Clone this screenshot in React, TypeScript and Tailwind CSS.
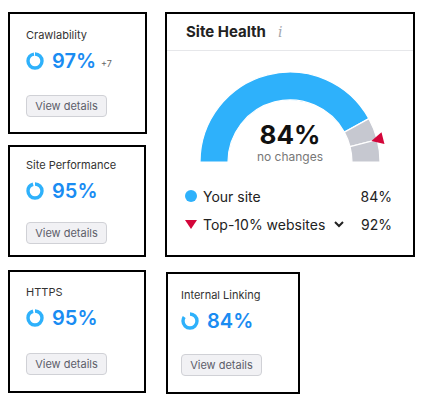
import React from "react";

type CardProps = {
  title: string;
  value: number;
  delta?: string;
  width: string;
  height: string;
  pad: string;
  btnGap: string;
};

function Ring({ pct }: { pct: number }) {
  const r = 7;
  const c = 2 * Math.PI * r;
  return (
    <svg width="18" height="18" viewBox="0 0 18 18" className="shrink-0">
      <circle
        cx="9"
        cy="9"
        r={r}
        fill="none"
        stroke="#2eb1fb"
        strokeWidth="3.4"
        strokeDasharray={`${(c * pct) / 100} ${c}`}
        transform="rotate(-90 9 9)"
      />
    </svg>
  );
}

function ScoreCard({ title, value, delta, width, height, pad, btnGap }: CardProps) {
  return (
    <div className={`border-2 border-black bg-white ${width} ${height} ${pad}`}>
      <div className="text-[11px] leading-[14px] text-[#333]">{title}</div>
      <div className="mt-[7px] flex h-[24px] items-center gap-[8px]">
        <Ring pct={value} />
        <span className="text-[20px] font-semibold leading-none text-[#1a8cf2]">{value}%</span>
        {delta && <span className="-ml-[3px] mt-[5px] text-[9px] text-[#666]">{delta}</span>}
      </div>
      <button
        className={`${btnGap} flex h-[22px] w-[81px] items-center justify-center rounded-[4px] border border-[#d0d1d6] bg-[#f1f1f4] text-[11px] text-[#5c5e6a]`}
      >
        View details
      </button>
    </div>
  );
}

// gauge geometry: center (123,111), r 90 / 62
const CX = 123;
const CY = 111;
const R1 = 90;
const R2 = 62;

function pt(f: number, r: number) {
  const a = Math.PI * (1 - f);
  return `${(CX + r * Math.cos(a)).toFixed(2)} ${(CY - r * Math.sin(a)).toFixed(2)}`;
}

function seg(f0: number, f1: number) {
  return `M ${pt(f0, R1)} A ${R1} ${R1} 0 0 1 ${pt(f1, R1)} L ${pt(f1, R2)} A ${R2} ${R2} 0 0 0 ${pt(f0, R2)} Z`;
}

function SiteHealth() {
  return (
    <div className="h-[245px] w-[250px] border-2 border-black bg-white">
      <div className="flex h-[37px] items-center gap-[12px] border-b border-[#e6e7ea] pl-[19px]">
        <span className="text-[15px] font-bold text-[#222]">Site Health</span>
        <span className="font-['DejaVu_Serif',serif] text-[14px] italic text-[#a5a7ae]">i</span>
      </div>
      <div className="relative h-[120px]">
        <svg width="246" height="120" viewBox="0 0 246 120" className="block">
          <path d={seg(0, 0.84)} fill="#2eb1fb" stroke="#fff" strokeWidth="1.2" />
          <path d={seg(0.84, 0.92)} fill="#c6c8d0" stroke="#fff" strokeWidth="1.2" />
          <path d={seg(0.92, 1)} fill="#c6c8d0" stroke="#fff" strokeWidth="1.2" />
          <polygon
            points={`${CX + 84},${CY} ${CX + 96},${CY - 6} ${CX + 96},${CY + 6}`}
            fill="#d3063a"
            transform={`rotate(-14.4 ${CX} ${CY})`}
          />
        </svg>
        <div className="absolute left-0 right-0 top-[71px] flex flex-col items-center">
          <span className="text-[26px] font-bold leading-[26px] text-[#111]">84%</span>
          <span className="mt-[2px] text-[12px] leading-[13px] text-[#777]">no changes</span>
        </div>
      </div>
      <div className="mt-[15px] flex flex-col gap-[8px] pl-[18px] pr-[21px] text-[14px] text-[#222]">
        <div className="flex h-[20px] items-center">
          <span className="mr-[6px] h-[12px] w-[12px] rounded-full bg-[#2eb1fb]" />
          <span>Your site</span>
          <span className="ml-auto">84%</span>
        </div>
        <div className="flex h-[20px] items-center">
          <svg width="12" height="9" viewBox="0 0 12 9" className="mr-[6px]">
            <polygon points="0,0 12,0 6,9" fill="#d3063a" />
          </svg>
          <span>Top-10% websites</span>
          <svg width="12" height="12" viewBox="0 0 12 12" className="ml-[8px]">
            <path d="M2 4 L6 8 L10 4" fill="none" stroke="#222" strokeWidth="2" />
          </svg>
          <span className="ml-auto">92%</span>
        </div>
      </div>
    </div>
  );
}

export default function App() {
  return (
    <div className="flex min-h-[406px] w-[427px] bg-white pl-[8px] pt-[12px] font-['Inter',sans-serif]">
      <div className="flex flex-col">
        <ScoreCard
          title="Crawlability"
          value={97}
          delta="+7"
          width="w-[139px]"
          height="h-[122px]"
          pad="pt-[14px] pl-[16px]"
          btnGap="mt-[22px]"
        />
        <div className="mt-[11px]">
          <ScoreCard
            title="Site Performance"
            value={95}
            width="w-[138px]"
            height="h-[112px]"
            pad="pt-[11px] pl-[16px]"
            btnGap="mt-[19px]"
          />
        </div>
        <div className="mt-[13px]">
          <ScoreCard
            title="HTTPS"
            value={95}
            width="w-[138px]"
            height="h-[123px]"
            pad="pt-[13px] pl-[16px]"
            btnGap="mt-[23px]"
          />
        </div>
      </div>
      <div className="ml-[18px] flex flex-col">
        <SiteHealth />
        <div className="ml-[1px] mt-[15px]">
          <ScoreCard
            title="Internal Linking"
            value={84}
            width="w-[134px]"
            height="h-[122px]"
            pad="pt-[14px] pl-[13px]"
            btnGap="mt-[21px]"
          />
        </div>
      </div>
    </div>
  );
}
